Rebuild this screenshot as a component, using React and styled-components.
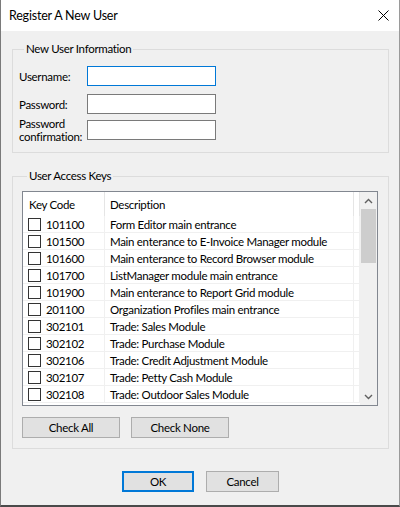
import React from 'react'
import styled, {createGlobalStyle} from 'styled-components'

const GlobalStyle = createGlobalStyle`
  html, body {
    margin: 0;
    padding: 0;
    background: #f0f0f0;
  }
  body {
    font-family: Lato, "Open Sans", sans-serif;
    font-size: 11.5px;
    letter-spacing: -0.3px;
    color: #000;
  }
`

const Window = styled.div`
  width: 400px;
  height: 507px;
  box-sizing: border-box;
  display: flex;
  flex-direction: column;
  background: #f0f0f0;
  border-left: 1px solid #7a7a7a;
  border-right: 1px solid #9a9a9a;
  border-bottom: 2px solid #4a4a4a;
  overflow: hidden;
`

const TitleBar = styled.div`
  height: 31px;
  flex: 0 0 31px;
  background: #fff;
  display: flex;
  align-items: center;
  justify-content: space-between;
  padding-left: 8px;
  padding-right: 10px;
`

const Title = styled.span`
  font-size: 12.5px;
  letter-spacing: -0.2px;
`

const CloseBtn = styled.svg`
  width: 11px;
  height: 11px;
`

const Body = styled.div`
  flex: 1;
  padding: 10px 10px 0 11px;
  display: flex;
  flex-direction: column;
`

const GroupBox = styled.fieldset`
  margin: ${p => p.$top || 0}px 0 0 0;
  padding: ${p => p.$pt}px 10px ${p => p.$pb}px ${p => p.$pl}px;
  border: 1px solid #dcdcdc;
  min-width: 0;
`

const Legend = styled.legend`
  margin-left: ${p => p.$ml}px;
  padding: 0 2px;
  line-height: 16px;
`

const FormRow = styled.div`
  display: flex;
  align-items: center;
  height: ${p => p.$h || 20}px;
  margin-top: ${p => p.$mt || 0}px;
`

const Label = styled.label`
  width: 68px;
  flex: 0 0 68px;
  line-height: 13px;
`

const TextBox = styled.div`
  width: 127px;
  height: 18px;
  background: #fff;
  border: 1px solid ${p => (p.$focus ? '#0078d7' : '#7a7a7a')};
`

const ListView = styled.div`
  height: 215px;
  box-sizing: border-box;
  border: 1px solid #828790;
  background: #fff;
  display: flex;
`

const ListBody = styled.div`
  flex: 1;
  display: flex;
  flex-direction: column;
  overflow: hidden;
`

const HeaderRow = styled.div`
  display: flex;
  height: 24px;
  flex: 0 0 24px;
  align-items: center;
`

const HeaderCell = styled.div`
  width: ${p => p.$w}px;
  flex: ${p => (p.$grow ? 1 : `0 0 ${p.$w}px`)};
  height: 100%;
  box-sizing: border-box;
  display: flex;
  align-items: center;
  padding-left: ${p => p.$pl}px;
  border-right: 1px solid #e5e5e5;
`

const Row = styled.div`
  display: flex;
  height: 17px;
  flex: 0 0 17px;
  box-sizing: border-box;
  border-bottom: 1px solid #f0f0f0;
`

const Cell = styled.div`
  width: ${p => p.$w}px;
  flex: ${p => (p.$grow ? 1 : `0 0 ${p.$w}px`)};
  box-sizing: border-box;
  display: flex;
  align-items: center;
  gap: 5px;
  padding-left: ${p => p.$pl || 0}px;
  border-right: 1px solid #f0f0f0;
  white-space: nowrap;
  overflow: hidden;
`

const CheckBox = styled.span`
  width: 11px;
  height: 11px;
  border: 1px solid #333;
  background: #fff;
  flex: 0 0 auto;
`

const ScrollBar = styled.div`
  width: 17px;
  flex: 0 0 17px;
  background: #f0f0f0;
  display: flex;
  flex-direction: column;
`

const Arrow = styled.div`
  height: 17px;
  flex: 0 0 17px;
  display: flex;
  align-items: center;
  justify-content: center;
`

const Track = styled.div`
  flex: 1;
  padding: 0 1px;
`

const Thumb = styled.div`
  height: 54px;
  background: #cdcdcd;
`

const ButtonRow = styled.div`
  display: flex;
  gap: ${p => p.$gap}px;
  justify-content: ${p => p.$center ? 'center' : 'flex-start'};
  margin-top: ${p => p.$mt}px;
`

const Button = styled.div`
  width: ${p => p.$w}px;
  height: 21px;
  box-sizing: border-box;
  background: #e1e1e1;
  border: ${p => (p.$default ? '2px solid #0078d7' : '1px solid #adadad')};
  display: flex;
  align-items: center;
  justify-content: center;
`

const keys = [
  ['101100', 'Form Editor main entrance'],
  ['101500', 'Main enterance to E-Invoice Manager module'],
  ['101600', 'Main enterance to Record Browser module'],
  ['101700', 'ListManager module main entrance'],
  ['101900', 'Main enterance to Report Grid module'],
  ['201100', 'Organization Profiles main entrance'],
  ['302101', 'Trade: Sales Module'],
  ['302102', 'Trade: Purchase Module'],
  ['302106', 'Trade: Credit Adjustment Module'],
  ['302107', 'Trade: Petty Cash Module'],
  ['302108', 'Trade: Outdoor Sales Module'],
]

const Chevron = ({up}) => (
  <svg width="9" height="6" viewBox="0 0 9 6">
    <path d={up ? 'M1 5 L4.5 1.5 L8 5' : 'M1 1 L4.5 4.5 L8 1'} fill="none" stroke="#606060" strokeWidth="1.4"/>
  </svg>
)

const App = () => {
    return (
        <Window>
            <GlobalStyle/>
            <TitleBar>
                <Title>Register A New User</Title>
                <CloseBtn viewBox="0 0 11 11">
                    <path d="M0.5 0.5 L10.5 10.5 M10.5 0.5 L0.5 10.5" stroke="#000" strokeWidth="1"/>
                </CloseBtn>
            </TitleBar>

            <Body>
                <GroupBox $pt={9} $pb={9} $pl={6}>
                    <Legend $ml={5}>New User Information</Legend>
                    <FormRow>
                        <Label>Username:</Label>
                        <TextBox $focus/>
                    </FormRow>
                    <FormRow $mt={8}>
                        <Label>Password:</Label>
                        <TextBox/>
                    </FormRow>
                    <FormRow $mt={3} $h={26}>
                        <Label>Password confirmation:</Label>
                        <TextBox/>
                    </FormRow>
                </GroupBox>

                <GroupBox $top={15} $pt={7} $pb={10} $pl={9}>
                    <Legend $ml={5}>User Access Keys</Legend>
                    <ListView>
                        <ListBody>
                            <HeaderRow>
                                <HeaderCell $w={82} $pl={6}>Key Code</HeaderCell>
                                <HeaderCell $w={249} $pl={5}>Description</HeaderCell>
                                <HeaderCell $grow/>
                            </HeaderRow>
                            {keys.map(([code, desc]) => (
                                <Row key={code}>
                                    <Cell $w={82} $pl={5}>
                                        <CheckBox/>
                                        {code}
                                    </Cell>
                                    <Cell $w={249} $pl={5}>{desc}</Cell>
                                    <Cell $grow/>
                                </Row>
                            ))}
                        </ListBody>
                        <ScrollBar>
                            <Arrow><Chevron up/></Arrow>
                            <Track><Thumb/></Track>
                            <Arrow><Chevron/></Arrow>
                        </ScrollBar>
                    </ListView>
                    <ButtonRow $gap={11} $mt={11}>
                        <Button $w={98}>Check All</Button>
                        <Button $w={98}>Check None</Button>
                    </ButtonRow>
                </GroupBox>

                <ButtonRow $gap={12} $mt={22} $center>
                    <Button $w={72} $default>OK</Button>
                    <Button $w={73}>Cancel</Button>
                </ButtonRow>
            </Body>
        </Window>
    )
}

export default App
